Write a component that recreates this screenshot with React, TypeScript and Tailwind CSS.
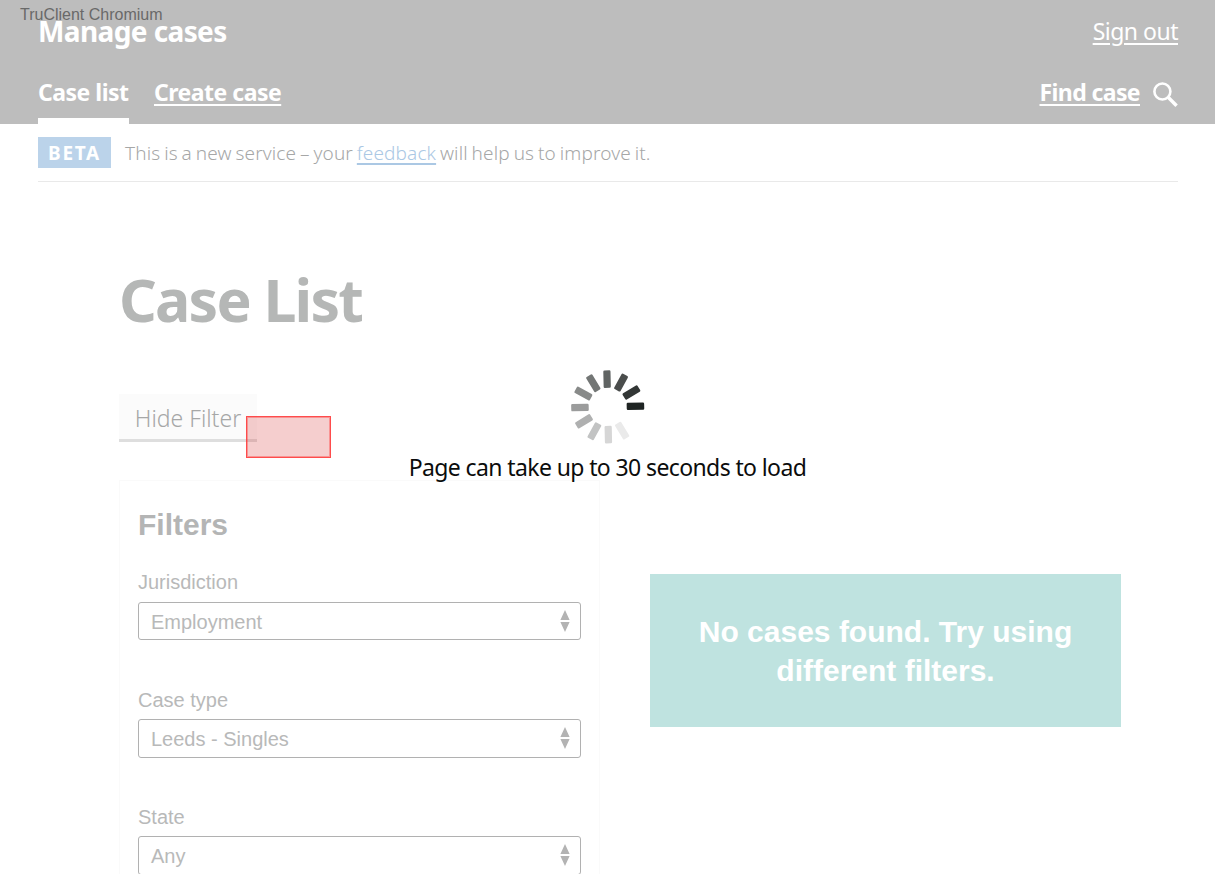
import React from "react";

const TRANSPORT = "font-['Noto_Sans',sans-serif]";

const SPOKES = [
  { angle: 0, fill: "#1f2423" },
  { angle: -30, fill: "#323635" },
  { angle: -60, fill: "#4a4d4c" },
  { angle: -90, fill: "#606463" },
  { angle: -120, fill: "#737675" },
  { angle: -150, fill: "#888a89" },
  { angle: -180, fill: "#9b9c9c" },
  { angle: -210, fill: "#afb0b0" },
  { angle: -240, fill: "#c2c3c3" },
  { angle: -270, fill: "#d6d6d6" },
  { angle: -300, fill: "#eaeaea" },
];

function Spinner() {
  return (
    <svg width="76" height="76" viewBox="-37.7 -37.9 76 76" aria-hidden="true">
      {SPOKES.map((s) => (
        <rect
          key={s.angle}
          x="19"
          y="-3.6"
          width="17.5"
          height="7.2"
          rx="1.2"
          fill={s.fill}
          transform={`rotate(${s.angle - 1.3})`}
        />
      ))}
    </svg>
  );
}

function SearchIcon() {
  return (
    <svg width="26" height="26" viewBox="0 0 26 26" fill="none" stroke="#fff" aria-hidden="true">
      <circle cx="10.4" cy="9.5" r="8" strokeWidth="2.6" />
      <path d="M16.4 15.5L24.6 23.7" strokeWidth="3.4" />
    </svg>
  );
}

function Field({ label, value }: { label: string; value: string }) {
  return (
    <div className="h-[117.2px] font-['Liberation_Sans',Arial,sans-serif] text-[20px] text-[#b8b9b9]">
      <div className="h-[32px] pt-[0.6px] leading-[24px]">{label}</div>
      <div className="flex h-[38.6px] items-center justify-between rounded-[3px] border border-[#b1b1b1] pl-[12px] pr-[10px]">
        <span className="pt-[1.4px] leading-6">{value}</span>
        <svg width="10" height="22" viewBox="0 0 10 22" fill="#b3b3b3" aria-hidden="true">
          <path d="M5 0L9.6 10H0.4zM0.4 12H9.6L5 22z" />
        </svg>
      </div>
    </div>
  );
}

export default function App() {
  return (
    <div className={`relative h-[874px] w-[1215px] overflow-hidden bg-white ${TRANSPORT}`}>
      <header className="flex h-[124px] flex-col justify-between bg-[#bdbdbd] pl-[38px] pr-[37px] text-white">
        <div className="flex h-[62px] items-center justify-between">
          <span className="whitespace-nowrap text-[28px] font-bold leading-[40px] tracking-[-0.6px]">Manage cases</span>
          <a className="whitespace-nowrap text-[23px] leading-[32px] tracking-[-0.5px] underline decoration-2 underline-offset-[3px]">Sign out</a>
        </div>
        <nav className="flex h-[60px] justify-between text-[23px] font-bold tracking-[-0.5px]">
          <div className="flex gap-[25px]">
            <a className="h-[60px] w-[91px] whitespace-nowrap border-b-[6px] border-white pt-[12px] leading-[32px]">Case list</a>
            <a className="whitespace-nowrap pt-[12px] leading-[32px] underline decoration-2 underline-offset-[3px]">Create case</a>
          </div>
          <div className="flex gap-[12px]">
            <a className="whitespace-nowrap pt-[12px] leading-[32px] tracking-[-0.6px] underline decoration-2 underline-offset-[3px]">Find case</a>
            <span className="pt-[18px]"><SearchIcon /></span>
          </div>
        </nav>
      </header>

      <div className="mx-[38px] mr-[37px] flex h-[58px] items-center gap-[14px] border-b border-[#e9e9e9]">
        <strong className="flex h-[31px] w-[73px] items-center justify-center bg-[#bbd3ea] pt-px text-[19px] tracking-[1.7px] text-white">BETA</strong>
        <span className="whitespace-nowrap text-[19px] font-light leading-[26px] tracking-[0.13px] text-[#a6a7a7] [word-spacing:-1.2px]">
          This is a new service – your <a className="text-[#abc8e4] underline decoration-2 underline-offset-[3px]">feedback</a> will help us to improve it.
        </span>
      </div>

      <main className="pl-[119px]">
        <h1 className="mt-[77px] h-[80px] whitespace-nowrap text-[59px] font-bold leading-[80px] tracking-[-1.8px] text-[#b5b7b6]">Case List</h1>
        <button className="mt-[55px] flex h-[48px] w-[138px] items-center justify-center whitespace-nowrap border-b-[3px] border-[#dedede] bg-[#fbfbfb] pt-[3px] text-[23px] font-light text-[#a6a7a7]">
          Hide Filter
        </button>
        <div className="mt-[38px] flex items-start">
          <section className="h-[420px] w-[481px] border border-[#fafafa] px-[18px] pt-[25px]">
            <h2 className="h-[63.8px] font-['Liberation_Sans',Arial,sans-serif] text-[30px] font-bold leading-[38px] text-[#b4b5b5]">Filters</h2>
            <Field label="Jurisdiction" value="Employment" />
            <Field label="Case type" value="Leeds - Singles" />
            <Field label="State" value="Any" />
          </section>
          <div className="ml-[50px] mt-[94px] flex h-[153px] w-[471px] items-center justify-center bg-[#bfe3e0] text-center font-['Liberation_Sans',Arial,sans-serif] text-[30px] font-bold leading-[39px] text-white">
            <p>No cases found. Try using<br />different filters.</p>
          </div>
        </div>
      </main>

      <div className="absolute left-[20px] top-[6px] whitespace-nowrap font-['Liberation_Sans',Arial,sans-serif] text-[16px] leading-[18px] text-[#696969]">TruClient Chromium</div>
      <div className="absolute left-[246px] top-[416px] h-[42px] w-[85px] border border-[#ff3535]/85 bg-[#d83c3c]/25 ring-1 ring-inset ring-[#ff3b3b]/40" />
      <div className="absolute inset-x-0 top-[369px] flex flex-col items-center">
        <Spinner />
        <p className="mt-[6px] whitespace-nowrap text-[23px] leading-[32px] tracking-[-0.61px] text-[#0b0c0c]">Page can take up to 30 seconds to load</p>
      </div>
    </div>
  );
}
